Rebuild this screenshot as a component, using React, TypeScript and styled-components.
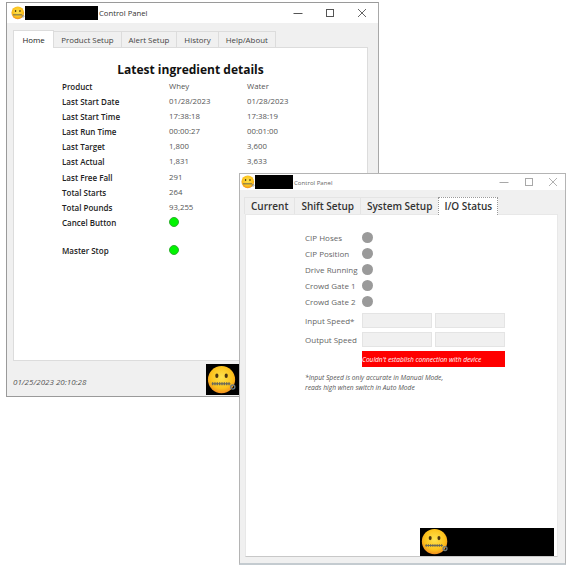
import React from "react";
import styled, { createGlobalStyle } from "styled-components";

const GlobalStyle = createGlobalStyle`
  html, body {
    margin: 0;
    padding: 0;
    background: #fff;
    font-family: "Open Sans", "Noto Sans", sans-serif;
  }
`;

const Desktop = styled.div`
  position: relative;
  width: 576px;
  height: 576px;
  overflow: hidden;
  background: #fff;
`;

// windows sit on a free canvas, so these two are placed by coordinates
const MainWindow = styled.div`
  position: absolute;
  left: 6px;
  top: 2px;
  width: 373px;
  height: 395px;
  display: flex;
  flex-direction: column;
  box-sizing: border-box;
  background: #f0f0f0;
  border: 1px solid #9a9a9a;
  border-right-color: #a8a8a8;
`;

const SecondWindow = styled.div`
  position: absolute;
  left: 239px;
  top: 173px;
  width: 327px;
  height: 392px;
  display: flex;
  flex-direction: column;
  box-sizing: border-box;
  background: #f0f0f0;
  border: 1px solid #b4b4b4;
  border-bottom: 2px solid #c4cbd0;
`;

const TitleBar = styled.div<{ $height: number; $pad: number }>`
  height: ${(p) => p.$height}px;
  flex: none;
  display: flex;
  align-items: center;
  padding-left: ${(p) => p.$pad}px;
  background: #fff;
`;

const Redacted = styled.div<{ $w: number; $h: number }>`
  width: ${(p) => p.$w}px;
  height: ${(p) => p.$h}px;
  background: #000;
`;

const TitleText = styled.span<{ $small?: boolean }>`
  margin-left: 1px;
  font-size: ${(p) => (p.$small ? 6.1 : 7.7)}px;
  color: ${(p) => (p.$small ? "#666" : "#333")};
`;

const WinControls = styled.div<{ $gap: number; $right: number; $faded?: boolean }>`
  margin-left: auto;
  margin-right: ${(p) => p.$right}px;
  display: flex;
  align-items: center;
  gap: ${(p) => p.$gap}px;
  color: ${(p) => (p.$faded ? "#a8a8a8" : "#555")};
`;

const Body = styled.div<{ $padTop: number; $padX: number; $padRight: number; $padBottom?: number }>`
  flex: 1;
  min-height: 0;
  display: flex;
  flex-direction: column;
  padding: ${(p) => p.$padTop}px ${(p) => p.$padRight}px ${(p) => p.$padBottom ?? 0}px ${(p) => p.$padX}px;
`;

const TabStrip = styled.div`
  display: flex;
  align-items: flex-end;
  flex: none;
`;

const LargeTabStrip = styled(TabStrip)`
  margin-left: -1px;
`;

const Tab = styled.div<{ $active?: boolean }>`
  height: ${(p) => (p.$active ? 18 : 16)}px;
  padding: 0 7px;
  display: flex;
  align-items: center;
  box-sizing: border-box;
  font-size: 7.9px;
  color: #444;
  background: ${(p) => (p.$active ? "#fff" : "#f0f0f0")};
  border: 1px solid #dcdcdc;
  border-bottom: none;
  margin-right: -1px;
  ${(p) => p.$active && "position: relative; z-index: 1; color: #222; margin-bottom: -1px; padding: 0 8.5px;"}
`;

const LargeTab = styled.div<{ $active?: boolean }>`
  height: ${(p) => (p.$active ? 18 : 17)}px;
  padding: 0 ${(p) => (p.$active ? 5 : 6)}px 1px;
  display: flex;
  align-items: center;
  box-sizing: border-box;
  font-size: 10px;
  font-weight: 600;
  color: #333;
  background: ${(p) => (p.$active ? "#fff" : "#f0f0f0")};
  border: ${(p) => (p.$active ? "1px dotted #999" : "1px solid #e4e4e4")};
  border-bottom: none;
  margin-right: -1px;
  ${(p) => p.$active && "position: relative; z-index: 1; margin-bottom: -1px;"}
`;

const Panel = styled.div`
  flex: 1;
  min-height: 0;
  box-sizing: border-box;
  background: #fff;
  border: 1px solid #dcdcdc;
`;

const MainPanel = styled(Panel)`
  display: flex;
  flex-direction: column;
`;

const Heading = styled.div`
  margin-top: 13px;
  text-align: center;
  font-size: 12px;
  line-height: 18px;
  font-weight: 700;
  color: #111;
`;

const DetailGrid = styled.div`
  margin: 0 0 0 48px;
  display: grid;
  grid-template-columns: 107px 78px 1fr;
  align-items: center;
`;

const RowLabel = styled.div`
  font-size: 8px;
  line-height: 15.1px;
  font-weight: 600;
  color: #222;
`;

const RowValue = styled.div`
  font-size: 7.8px;
  line-height: 15.1px;
  color: #555;
`;

const GreenLamp = styled.div`
  width: 10px;
  height: 10px;
  border-radius: 50%;
  background: #00f400;
  border: 0.5px solid #30b030;
  box-sizing: border-box;
`;

const Spacer = styled.div`
  grid-column: 1 / -1;
  height: 13px;
`;

const StatusBar = styled.div`
  height: 35px;
  flex: none;
  display: flex;
  align-items: center;
  justify-content: space-between;
  padding: 2px 129px 0 0;
  box-sizing: border-box;
`;

const DateText = styled.span`
  margin-top: 3px;
  font-size: 8px;
  font-style: italic;
  color: #555;
`;

const LogoBox = styled.div<{ $w: number; $h: number }>`
  width: ${(p) => p.$w}px;
  height: ${(p) => p.$h}px;
  background: #000;
  display: flex;
  align-items: center;
  padding-left: 1px;
  box-sizing: border-box;
`;

const IoPanel = styled(Panel)`
  display: flex;
  flex-direction: column;
  padding: 14px 0 0 59px;
  border-color: #e8e8e8;
  border-bottom-color: #c8c8c8;
`;

const IoGrid = styled.div`
  display: grid;
  grid-template-columns: 54px 70px 70px;
  column-gap: 3px;
  align-items: center;
  width: 200px;
`;

const IoLabel = styled.div<{ $tall?: boolean }>`
  grid-column: 1;
  height: ${(p) => (p.$tall ? 19 : 16)}px;
  display: flex;
  align-items: center;
  font-size: 8px;
  color: #666;
  white-space: nowrap;
`;

const SpeedGap = styled.div`
  grid-column: 1 / -1;
  height: 2px;
`;

const GreyLamp = styled.div`
  grid-column: 2 / 4;
  width: 11px;
  height: 11px;
  border-radius: 50%;
  background: #9a9a9a;
`;

const Field = styled.div`
  height: 15px;
  box-sizing: border-box;
  background: #f0f0f0;
  border: 1px solid #e4e4e4;
`;

const ErrorBox = styled.div`
  grid-column: 2 / 4;
  height: 16px;
  margin-top: 2px;
  display: flex;
  align-items: center;
  background: #ff0000;
  color: #fff;
  font-size: 6.6px;
  font-style: italic;
`;

const Note = styled.div`
  margin-top: 6px;
  font-size: 6.7px;
  line-height: 10px;
  font-style: italic;
  color: #555;
`;

const IoFooter = styled.div`
  margin: auto 3px 0 auto;
`;

const Emoji = ({ size }: { size: number }) => (
  <svg width={size} height={size} viewBox="0 0 32 32" style={{ flex: "none" }}>
    <defs>
      <radialGradient id="face" cx="50%" cy="42%" r="58%">
        <stop offset="0%" stopColor="#fde24f" />
        <stop offset="70%" stopColor="#fcc21b" />
        <stop offset="100%" stopColor="#f19020" />
      </radialGradient>
    </defs>
    <circle cx="15.5" cy="15.5" r="14.5" fill="url(#face)" />
    <ellipse cx="10.5" cy="11.5" rx="1.7" ry="2.4" fill="#4a3410" />
    <ellipse cx="20.5" cy="11.5" rx="1.7" ry="2.4" fill="#4a3410" />
    <path
      d="M6 21.5v-3M8.5 21.5v-3M11 21.5v-3M13.5 21.5v-3M16 21.5v-3M18.5 21.5v-3M21 21.5v-3M23.5 21.5v-3"
      stroke="#6a6a5a"
      strokeWidth="1.4"
    />
    <path d="M5 20h20" stroke="#6a6a5a" strokeWidth="1.2" />
    <circle cx="27.5" cy="23.5" r="2.2" fill="none" stroke="#6d7b80" strokeWidth="1.5" />
  </svg>
);

const Controls = () => (
  <>
    <svg width="10" height="10" viewBox="0 0 10 10">
      <path d="M0.5 5.5h9" stroke="currentColor" strokeWidth="1" />
    </svg>
    <svg width="10" height="10" viewBox="0 0 10 10">
      <rect x="1.5" y="1.5" width="7" height="7" fill="none" stroke="currentColor" strokeWidth="1" />
    </svg>
    <svg width="10" height="10" viewBox="0 0 10 10">
      <path d="M1 1l8 8M9 1l-8 8" stroke="currentColor" strokeWidth="0.9" />
    </svg>
  </>
);

const rows = [
  ["Last Start Date", "01/28/2023", "01/28/2023"],
  ["Last Start Time", "17:38:18", "17:38:19"],
  ["Last Run Time", "00:00:27", "00:01:00"],
  ["Last Target", "1,800", "3,600"],
  ["Last Actual", "1,831", "3,633"],
  ["Last Free Fall", "291", ""],
  ["Total Starts", "264", ""],
  ["Total Pounds", "93,255", ""],
];

const lamps = ["CIP Hoses", "CIP Position", "Drive Running", "Crowd Gate 1", "Crowd Gate 2"];

export default function App() {
  return (
    <Desktop>
      <GlobalStyle />
      <MainWindow>
        <TitleBar $height={20} $pad={4}>
          <Emoji size={14} />
          <Redacted $w={73} $h={14} />
          <TitleText>Control Panel</TitleText>
          <WinControls $gap={22} $right={11}>
            <Controls />
          </WinControls>
        </TitleBar>
        <Body $padTop={7} $padX={6} $padRight={10}>
          <TabStrip>
            <Tab $active>Home</Tab>
            <Tab>Product Setup</Tab>
            <Tab>Alert Setup</Tab>
            <Tab>History</Tab>
            <Tab>Help/About</Tab>
          </TabStrip>
          <MainPanel>
            <Heading>Latest ingredient details</Heading>
            <DetailGrid>
              <RowLabel>Product</RowLabel>
              <RowValue>Whey</RowValue>
              <RowValue>Water</RowValue>
              {rows.map(([label, a, b]) => (
                <React.Fragment key={label}>
                  <RowLabel>{label}</RowLabel>
                  <RowValue>{a}</RowValue>
                  <RowValue>{b}</RowValue>
                </React.Fragment>
              ))}
              <RowLabel>Cancel Button</RowLabel>
              <GreenLamp />
              <div />
              <Spacer />
              <RowLabel>Master Stop</RowLabel>
              <GreenLamp />
              <div />
            </DetailGrid>
          </MainPanel>
          <StatusBar>
            <DateText>01/25/2023 20:10:28</DateText>
            <LogoBox $w={33} $h={31}>
              <Emoji size={30} />
            </LogoBox>
          </StatusBar>
        </Body>
      </MainWindow>

      <SecondWindow>
        <TitleBar $height={16} $pad={1}>
          <Emoji size={14} />
          <Redacted $w={38} $h={14} />
          <TitleText $small>Control Panel</TitleText>
          <WinControls $gap={14.5} $right={7} $faded>
            <Controls />
          </WinControls>
        </TitleBar>
        <Body $padTop={7} $padX={5} $padRight={7} $padBottom={6}>
          <LargeTabStrip>
            <LargeTab>Current</LargeTab>
            <LargeTab>Shift Setup</LargeTab>
            <LargeTab>System Setup</LargeTab>
            <LargeTab $active>I/O Status</LargeTab>
          </LargeTabStrip>
          <IoPanel>
            <IoGrid>
              {lamps.map((name) => (
                <React.Fragment key={name}>
                  <IoLabel>{name}</IoLabel>
                  <GreyLamp />
                </React.Fragment>
              ))}
              <SpeedGap />
              <IoLabel $tall>Input Speed*</IoLabel>
              <Field />
              <Field />
              <IoLabel $tall>Output Speed</IoLabel>
              <Field />
              <Field />
              <ErrorBox>Couldn't establish connection with device</ErrorBox>
            </IoGrid>
            <Note>
              *Input Speed is only accurate in Manual Mode,
              <br />
              reads high when switch in Auto Mode
            </Note>
            <IoFooter>
              <LogoBox $w={134} $h={28}>
                <Emoji size={28} />
              </LogoBox>
            </IoFooter>
          </IoPanel>
        </Body>
      </SecondWindow>
    </Desktop>
  );
}
